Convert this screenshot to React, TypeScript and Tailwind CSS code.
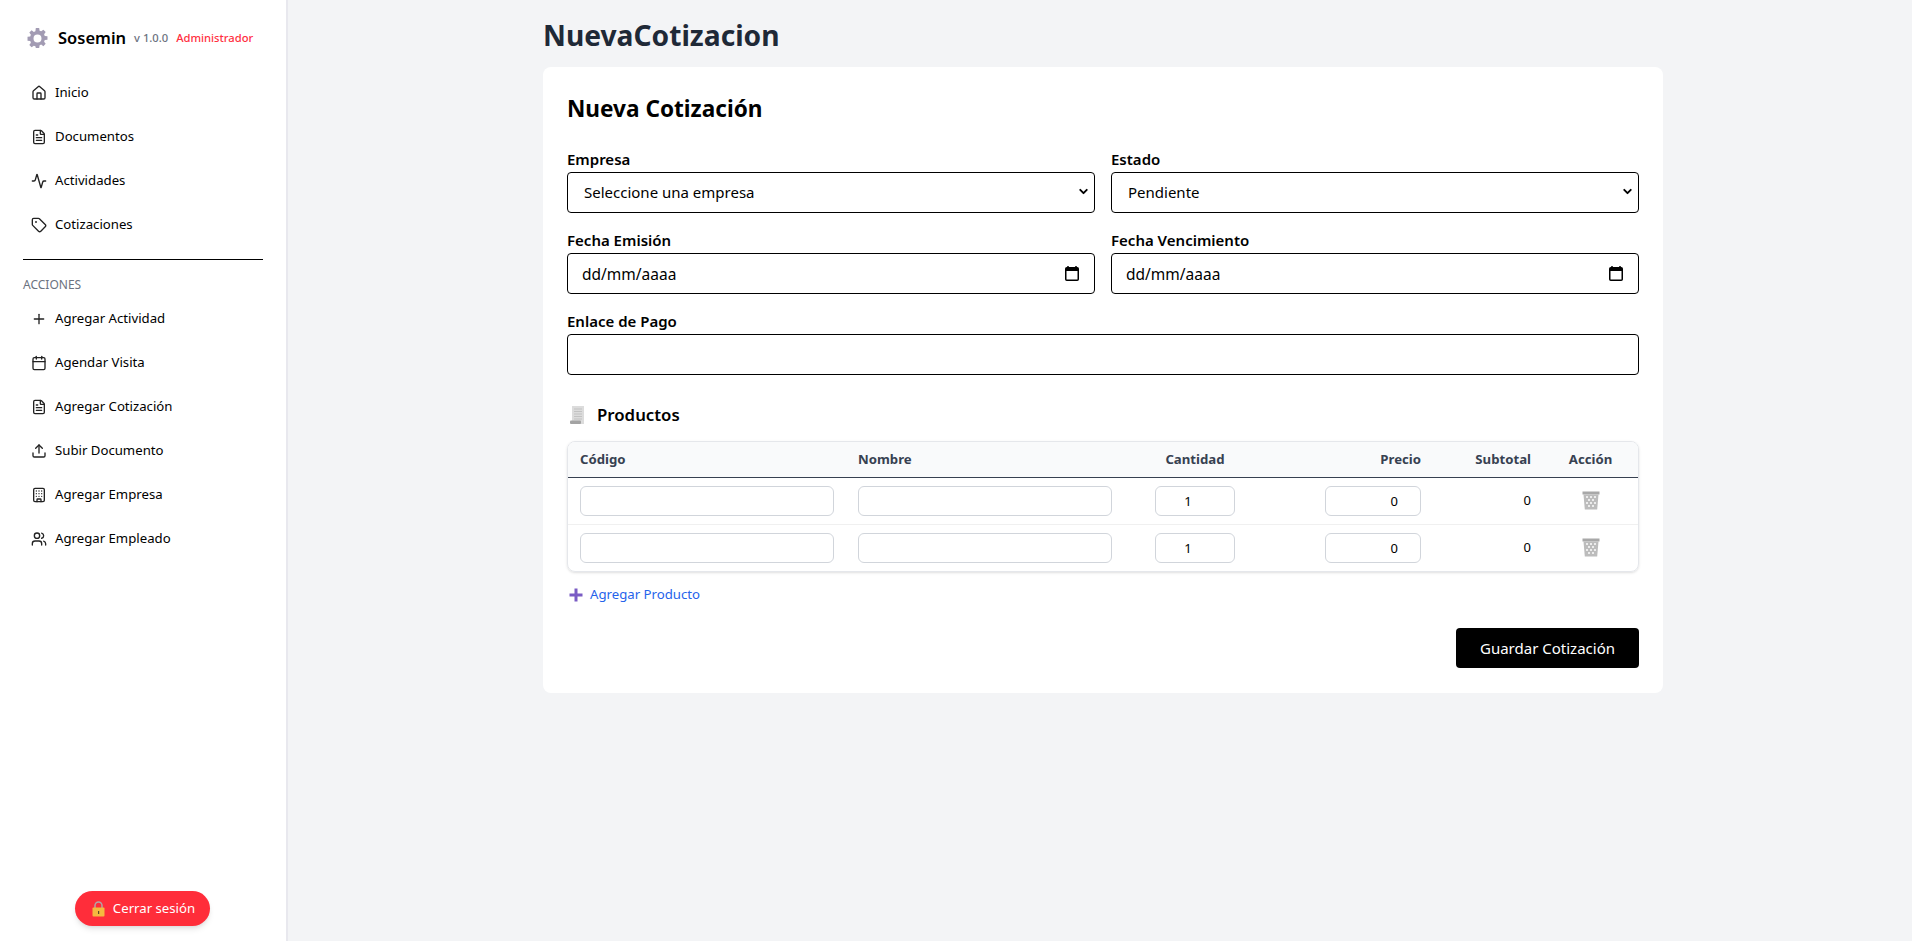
import React from 'react';
import { Home, FileText, Activity, Tag, Plus, Calendar, Upload, Building, Users, ChevronDown } from 'lucide-react';

const font = "font-['Noto_Sans',sans-serif]";

const mainLinks = [
  { label: 'Inicio', icon: Home },
  { label: 'Documentos', icon: FileText },
  { label: 'Actividades', icon: Activity },
  { label: 'Cotizaciones', icon: Tag },
];

const actionLinks = [
  { label: 'Agregar Actividad', icon: Plus },
  { label: 'Agendar Visita', icon: Calendar },
  { label: 'Agregar Cotización', icon: FileText },
  { label: 'Subir Documento', icon: Upload },
  { label: 'Agregar Empresa', icon: Building },
  { label: 'Agregar Empleado', icon: Users },
];

const GearIcon = () => (
  <svg width="21" height="21" viewBox="0 0 20 20" className="text-[#a29bb3]">
    <path
      fill="currentColor"
      fillRule="evenodd"
      d="M8.4 0h3.2l.4 2.6 1.5.6 2.1-1.5 2.2 2.2-1.5 2.1.6 1.5 2.6.4v3.2l-2.6.4-.6 1.5 1.5 2.1-2.2 2.2-2.1-1.5-1.5.6-.4 2.6H8.4L8 17.4l-1.5-.6-2.1 1.5-2.2-2.2 1.5-2.1-.6-1.5-2.6-.4V8.400l2.6-.4.6-1.5-1.5-2.1 2.2-2.2 2.1 1.5L8 3.2zM10 6.200a3.800 3.800 0 1 0 0 7.600 3.800 3.800 0 0 0 0-7.600z"
    />
  </svg>
);

const LockIcon = () => (
  <svg width="13" height="16" viewBox="0 0 13 16">
    <path d="M3 7V4.500a3.500 3.500 0 0 1 7 0V7" fill="none" stroke="#b0a8a8" strokeWidth="1.500" />
    <rect x="0.500" y="6.500" width="12" height="9" rx="1" fill="#f5b93f" />
    <rect x="6" y="10" width="1.200" height="3" fill="#5b4a2a" />
  </svg>
);

const ReceiptIcon = () => (
  <svg width="17" height="20" viewBox="0 0 17 20">
    <rect x="3" y="1" width="12" height="18" fill="#dcdcdc" />
    <path d="M5 4h8M5 6.500h8M5 9h8M5 11.500h8M5 14h8" stroke="#c2c2c2" strokeWidth="1" />
    <rect x="1" y="15.500" width="11" height="3.500" rx="1" fill="#a3a3a3" />
  </svg>
);

const TrashIcon = () => (
  <svg width="18" height="19" viewBox="0 0 18 19">
    <rect x="0.500" y="0.500" width="17" height="3" fill="#a8a8a8" />
    <path d="M1.500 3.500h15l-1.300 15H2.800z" fill="#bcbcbc" />
    <g fill="#ececec">
      <rect x="4" y="5" width="2" height="2" />
      <rect x="8" y="5" width="2" height="2" />
      <rect x="12" y="5" width="2" height="2" />
      <rect x="6" y="8" width="2" height="2" />
      <rect x="10" y="8" width="2" height="2" />
      <rect x="4" y="11" width="2" height="2" />
      <rect x="8" y="11" width="2" height="2" />
      <rect x="12" y="11" width="2" height="2" />
      <rect x="6" y="14" width="2" height="2" />
      <rect x="10" y="14" width="2" height="2" />
    </g>
  </svg>
);

const NativeCalendarIcon = () => (
  <svg width="14" height="15" viewBox="0 0 14 15" className="absolute right-[16px] top-[13px]">
    <path d="M3 0v2M11 0v2" stroke="#000" strokeWidth="1.500" />
    <rect x="0.750" y="1.750" width="12.500" height="12.500" rx="1" fill="none" stroke="#000" strokeWidth="1.500" />
    <rect x="1" y="2" width="12" height="3" fill="#000" />
  </svg>
);

const PlusIcon = () => (
  <svg width="14" height="14" viewBox="0 0 14 14">
    <path d="M5.500 0.500h3v5h5v3h-5v5h-3v-5h-5v-3h5z" fill="#7a5cc4" />
  </svg>
);

const SidebarLink = ({ label, icon: Icon }: { label: string; icon: React.ElementType }) => (
  <a href="#" className="flex h-11 items-center pl-[31px] text-[13.2px] text-black">
    <Icon size={16} strokeWidth={2} className="mr-[8px] text-[#222]" />
    <span>{label}</span>
  </a>
);

const fieldClass = 'h-[41px] w-full rounded border border-black bg-white pl-4 text-[15px] text-black outline-none';
const labelClass = 'mb-[3px] block text-[15px] font-semibold leading-5 text-black';

const DateField = ({ label }: { label: string }) => (
  <div>
    <label className={labelClass}>{label}</label>
    <div className="relative">
      <input type="text" placeholder="dd/mm/aaaa" className={`${fieldClass} !pl-[14px] !text-[15.500px] placeholder:text-black`} />
      <NativeCalendarIcon />
    </div>
  </div>
);

const SelectField = ({ label, value }: { label: string; value: string }) => (
  <div>
    <label className={labelClass}>{label}</label>
    <div className="relative">
      <div className={`${fieldClass} flex items-center`}>{value}</div>
      <ChevronDown size={13} strokeWidth={3.500} className="absolute right-[5px] top-[13px] text-black" />
    </div>
  </div>
);

const ProductRow = ({ last }: { last?: boolean }) => {
  const input = 'h-[30px] rounded-md border border-[#d1d5db] bg-white text-[13px] text-black outline-none';
  return (
    <tr className={last ? '' : 'border-b border-[#f0f0f0]'}>
      <td className="h-[47px] px-3"><input className={`${input} w-full px-2`} /></td>
      <td className="px-3"><input className={`${input} w-full px-2`} /></td>
      <td className="px-3 text-center"><input className={`${input} w-[80px] pl-2 pr-[22px] text-center`} defaultValue="1" /></td>
      <td className="px-3 text-right"><input className={`${input} w-[96px] pl-2 pr-[22px] text-right`} defaultValue="0" /></td>
      <td className="px-3 text-right text-[13px] text-black">0</td>
      <td className="px-3"><div className="flex justify-center"><TrashIcon /></div></td>
    </tr>
  );
};

export default function App() {
  return (
    <div className={`flex min-h-[941px] bg-[#f3f4f6] ${font}`}>
      <aside className="flex h-[941px] w-[288px] shrink-0 flex-col border-r-2 border-[#e8e8ee] bg-white">
        <div className="flex h-[71px] items-center pl-[27px] pt-[5px]">
          <GearIcon />
          <span className="ml-[10px] text-[16.500px] font-semibold text-black">Sosemin</span>
          <span className="ml-2 text-[11.200px] font-medium text-[#6b7280]">v 1.0.0</span>
          <span className="ml-2 text-[11.200px] font-medium text-[#ff2f3f]">Administrador</span>
        </div>
        <nav>
          {mainLinks.map((l) => <SidebarLink key={l.label} {...l} />)}
        </nav>
        <div className="mx-[23px] mt-[12px] border-t border-black" />
        <div className="mb-[4px] ml-[23px] mt-[17px] text-[12px] leading-4 text-[#6b7280]">ACCIONES</div>
        <nav>
          {actionLinks.map((l) => <SidebarLink key={l.label} {...l} />)}
        </nav>
        <div className="mt-auto flex justify-center pb-[15px] pr-[2px]">
          <button className="flex h-[35px] w-[135px] items-center justify-center gap-2 rounded-full bg-[#ff2d3a] pl-[3px] text-[13.200px] text-white shadow-md">
            <LockIcon />
            Cerrar sesión
          </button>
        </div>
      </aside>
      <main className="flex-1 pl-[255px] pr-[249px]">
        <h1 className="h-[67px] pt-[15px] text-[28.200px] font-bold leading-[40px] text-[#1f2937]">NuevaCotizacion</h1>
        <div className="rounded-lg bg-white px-6 pb-[25px] pt-[25px]">
          <h2 className="text-[22.600px] font-bold leading-[34px] text-black">Nueva Cotización</h2>
          <div className="mt-[23px] grid grid-cols-2 gap-x-4 gap-y-[17px]">
            <SelectField label="Empresa" value="Seleccione una empresa" />
            <SelectField label="Estado" value="Pendiente" />
            <DateField label="Fecha Emisión" />
            <DateField label="Fecha Vencimiento" />
            <div className="col-span-2">
              <label className={labelClass}>Enlace de Pago</label>
              <input className={fieldClass} />
            </div>
          </div>
          <div className="mt-[27px] flex items-center gap-[11px] pl-[2px]">
            <ReceiptIcon />
            <span className="text-[16.800px] font-semibold text-black">Productos</span>
          </div>
          <div className="mt-[14px] overflow-hidden rounded-lg border border-[#e5e7eb] shadow-sm">
            <table className="w-full table-fixed border-collapse">
              <thead>
                <tr className="h-[35px] border-b border-[#374151] bg-[#f9fafb] text-[13.200px] font-bold text-[#374151]">
                  <th className="w-[278px] px-3 text-left">Código</th>
                  <th className="w-[278px] px-3 text-left">Nombre</th>
                  <th className="w-[142px] px-3 text-center">Cantidad</th>
                  <th className="w-[167px] px-3 text-right">Precio</th>
                  <th className="w-[110px] px-3 text-right">Subtotal</th>
                  <th className="px-3 text-center">Acción</th>
                </tr>
              </thead>
              <tbody>
                <ProductRow />
                <ProductRow last />
              </tbody>
            </table>
          </div>
          <button className="mt-[13px] flex items-center gap-[7px] pl-[2px] text-[13.200px] text-[#2563eb]">
            <PlusIcon />
            Agregar Producto
          </button>
          <div className="mt-[23px] flex justify-end">
            <button className="h-10 w-[183px] rounded bg-black text-[15px] text-white">Guardar Cotización</button>
          </div>
        </div>
      </main>
    </div>
  );
}
